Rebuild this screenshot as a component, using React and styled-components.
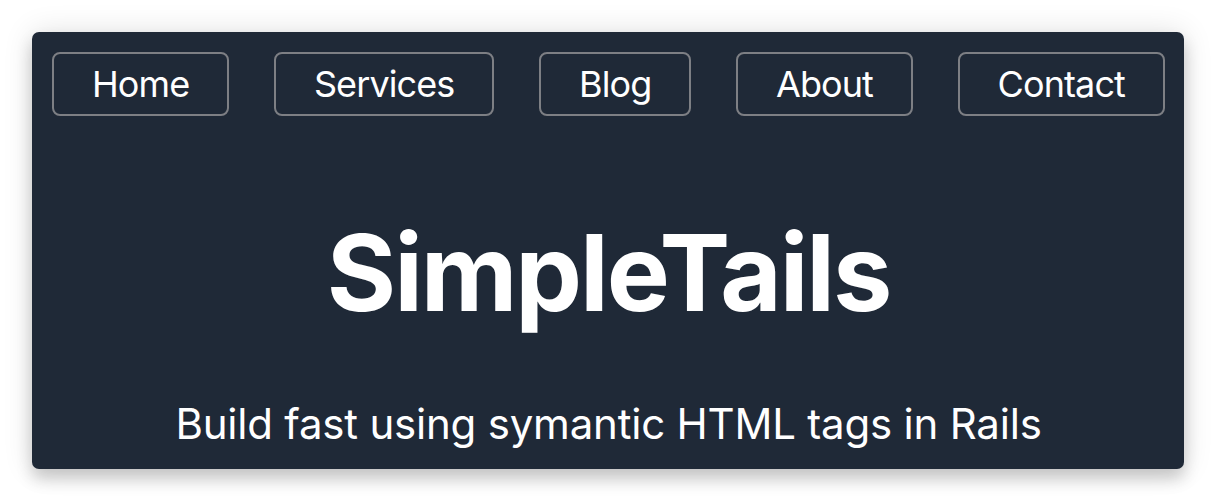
import React from 'react';
import styled, { createGlobalStyle } from 'styled-components';

// STYLES

const GlobalStyle = createGlobalStyle`
    html, body {
        margin: 0;
        padding: 0;
        background: #ffffff;
    }
    body {
        font-family: Inter, "Noto Sans", sans-serif;
    }
`;

const Page = styled.div`
    padding: 32px;
`;

const Hero = styled.header`
    background-color: #1f2937;
    border-radius: 7px;
    padding: 20px 19px 17px 20px;
    height: 437px;
    box-sizing: border-box;
    display: flex;
    flex-direction: column;
    align-items: center;
    color: #ffffff;
    box-shadow: 0 0 30px rgba(0, 0, 0, 0.12), 0 10px 16px rgba(0, 0, 0, 0.18);
`;

const Nav = styled.nav`
    display: flex;
    justify-content: space-between;
    align-self: stretch;
`;

const NavLink = styled.a`
    display: block;
    padding: 10px 38px;
    font-size: 36px;
    line-height: 40px;
    letter-spacing: -0.025em;
    color: #ffffff;
    border: 2px solid #7d7f84;
    border-radius: 8px;
    text-decoration: none;
    cursor: pointer;
`;

const Title = styled.h1`
    margin: 104px 0 0;
    font-size: 106px;
    line-height: 1;
    font-weight: 700;
    letter-spacing: -0.02em;
`;

const Tagline = styled.p`
    margin: auto 0 0;
    font-size: 42px;
    line-height: 56px;
    letter-spacing: -0.005em;
`;

const links = ['Home', 'Services', 'Blog', 'About', 'Contact'];

// COMPONENT

export default function App() {
    return (
        <Page>
            <GlobalStyle />
            <Hero>
                <Nav>
                    {links.map(link => (
                        <NavLink key={link} href="#0">{link}</NavLink>
                    ))}
                </Nav>
                <Title>SimpleTails</Title>
                <Tagline>Build fast using symantic HTML tags in Rails</Tagline>
            </Hero>
        </Page>
    );
}
